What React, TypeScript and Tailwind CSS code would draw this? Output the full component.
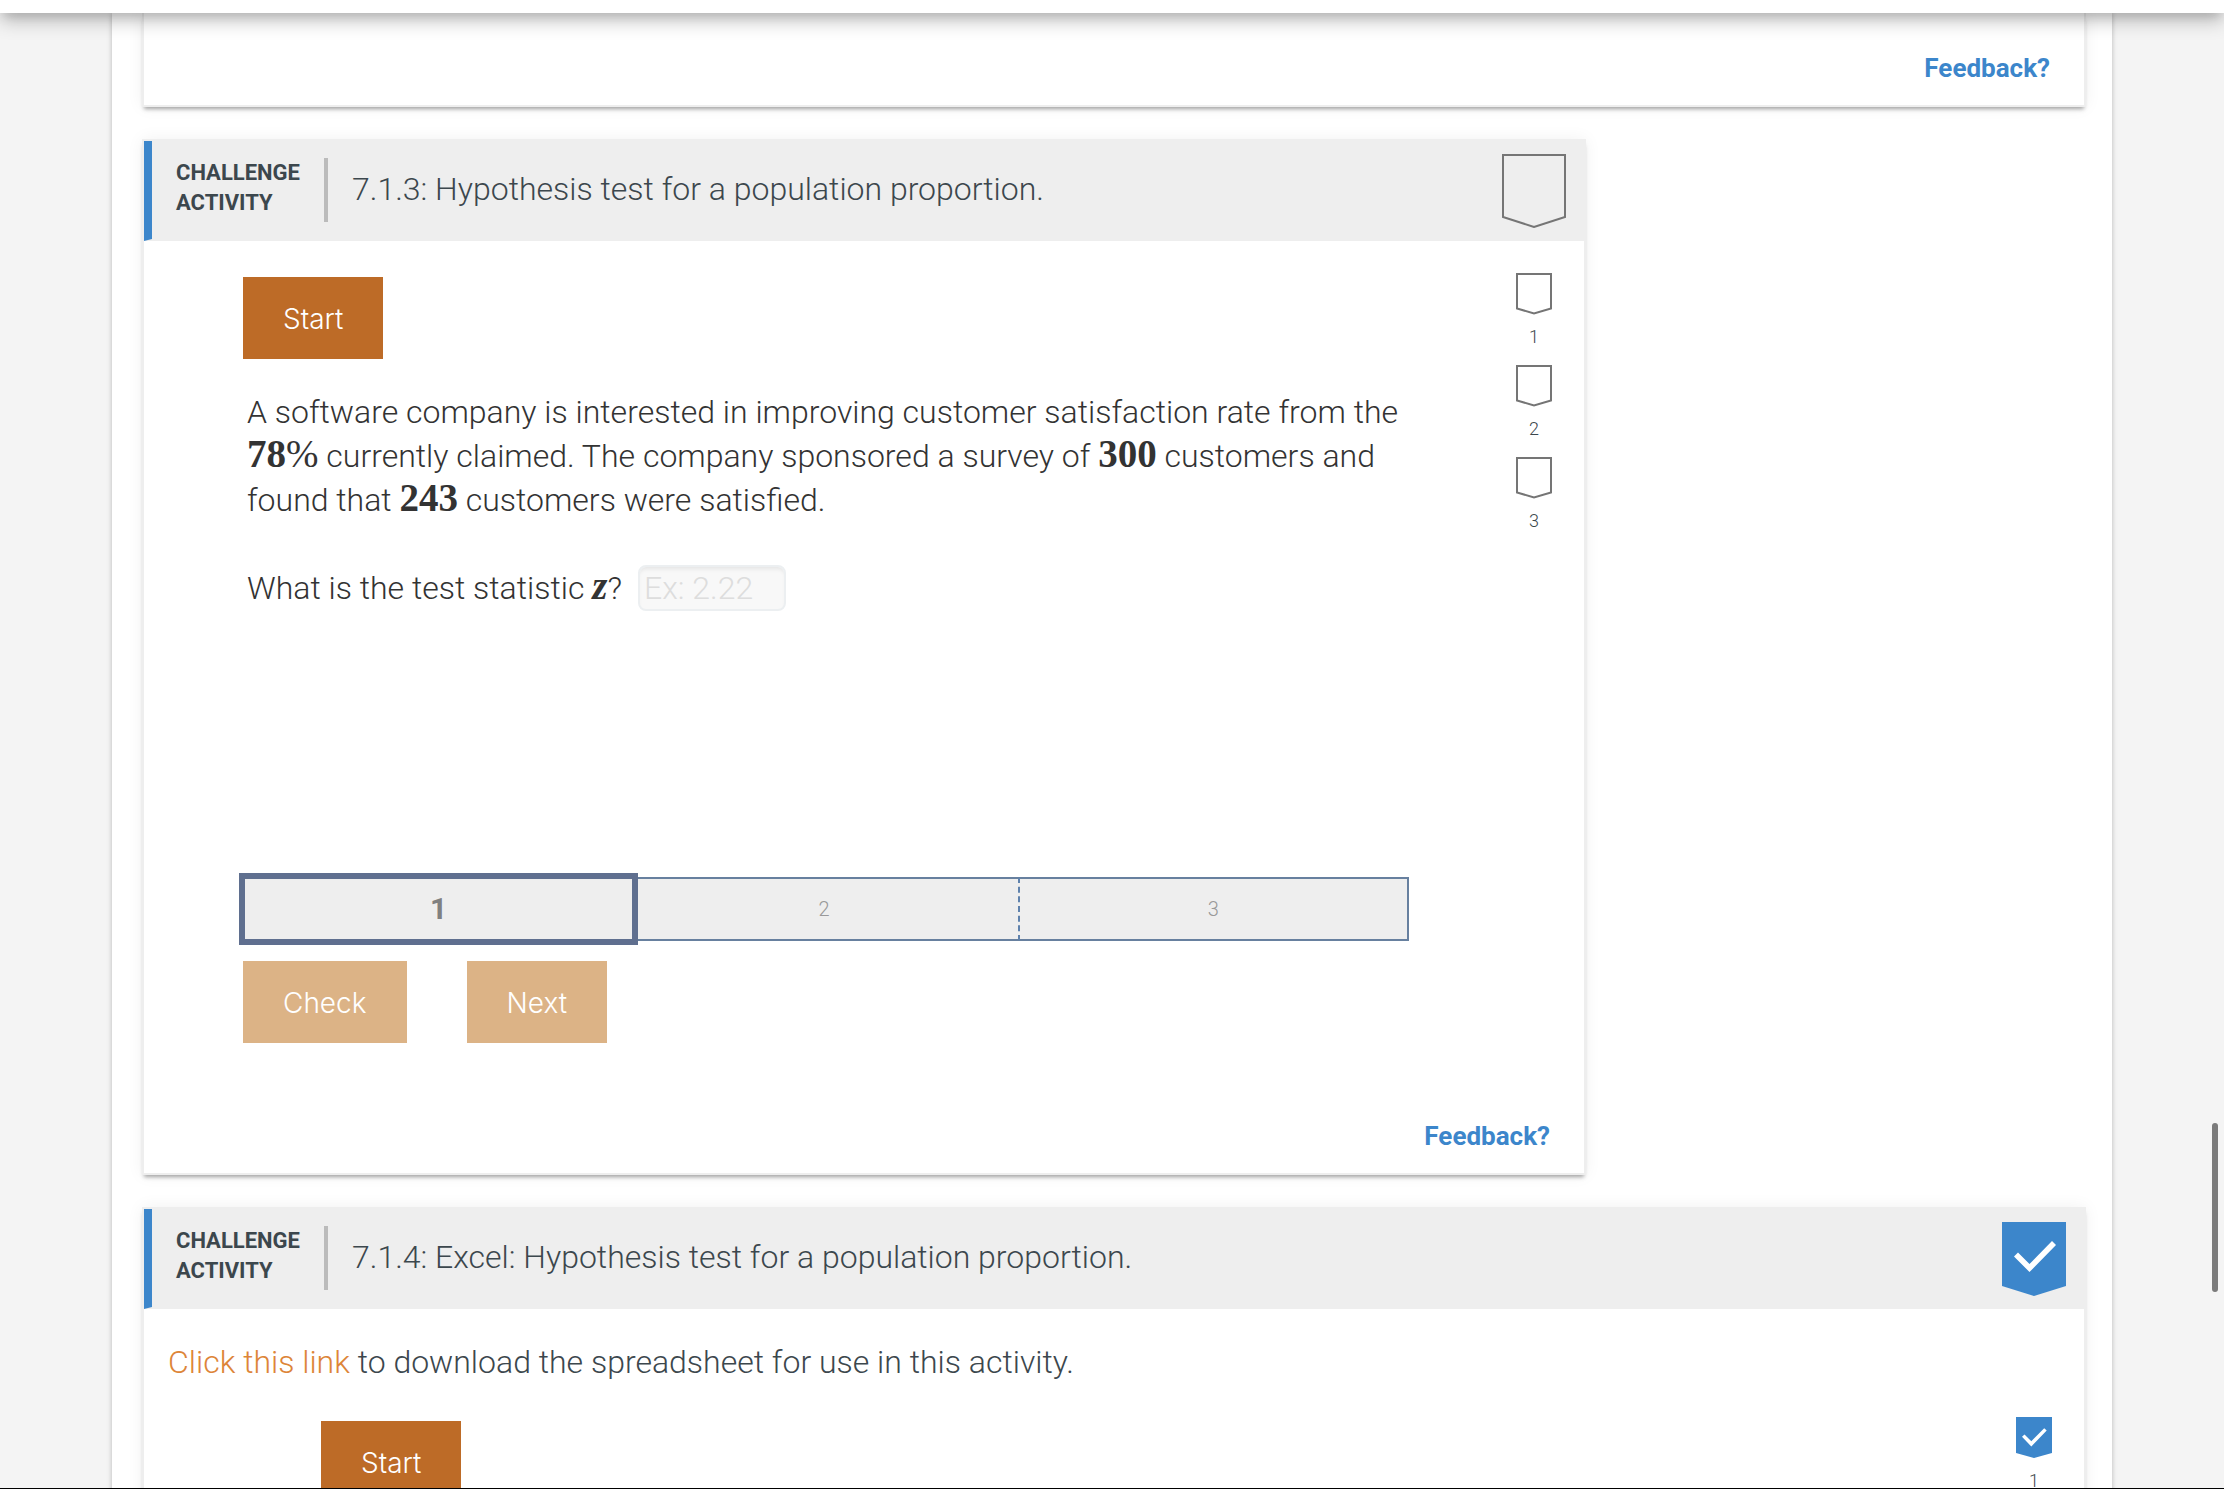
import React from 'react';

type BadgeProps = { done?: boolean };

function BadgeLarge({ done }: BadgeProps) {
    if (done) {
        return (
            <svg width="64" height="74" viewBox="0 0 64 74" role="img" aria-label="Activity completed">
                <path d="M0 0H64V64L32 74L0 64Z" fill="#3c86cb" />
                <path d="M12 34.5L16 30.5L27.5 42L50 19L54 23L27.5 50Z" fill="#fff" />
            </svg>
        );
    }
    return (
        <svg width="64" height="74" viewBox="0 0 64 74" role="img" aria-label="Activity not completed">
            <path d="M1 1H63V63L32 73L1 63Z" fill="none" stroke="#757575" strokeWidth="2" />
        </svg>
    );
}

function BadgeSmall({ done }: BadgeProps) {
    if (done) {
        return (
            <svg width="36" height="42" viewBox="0 0 36 42" role="img" aria-label="Level completed">
                <path d="M0 0H36V36L18 41L0 36Z" fill="#3c86cb" />
                <path d="M6 19.8L8.5 17.4L15.3 24.2L28.2 11.2L30.7 13.6L15.3 29.4Z" fill="#fff" />
            </svg>
        );
    }
    return (
        <svg width="36" height="42" viewBox="0 0 36 42" role="img" aria-label="Level not completed">
            <path d="M1 1H35V35.5L18 40.5L1 35.5Z" fill="none" stroke="#757575" strokeWidth="2" />
        </svg>
    );
}

function Levels({ count, done }: { count: number; done?: boolean }) {
    return (
        <ol className="flex flex-col gap-[18px] mr-8 shrink-0">
            {Array.from({ length: count }, (_, i) => (
                <li key={i} className="flex flex-col items-center gap-3">
                    <BadgeSmall done={done} />
                    <span className="text-[18px] leading-5 font-light">{i + 1}</span>
                </li>
            ))}
        </ol>
    );
}

function Button({ children, disabled }: { children: React.ReactNode; disabled?: boolean }) {
    return (
        <button
            type="button"
            disabled={disabled}
            className="h-[82px] px-10 pt-0.5 bg-[#bd6b27] disabled:bg-[#dcb386] text-white text-[28px] font-light font-['Inter',sans-serif]"
        >
            {children}
        </button>
    );
}

function Feedback() {
    return (
        <div className="flex justify-end pr-[34px] pb-[19px]">
            <a href="#feedback" className="text-[26px] leading-9 font-bold text-[#3c86cb]">
                Feedback?
            </a>
        </div>
    );
}

function ActivityHeader({ title, done }: { title: string; done?: boolean }) {
    return (
        <header className="h-[100px] flex items-start bg-[#eee] border-l-8 border-b-2 border-l-[#3c86cb] border-b-[#eee] pl-6 pr-[18px]">
            <div className="mt-[17px] h-16 w-[152px] border-r-4 border-[#bbb] text-[22px] leading-[30px] font-bold uppercase">
                Challenge activity
            </div>
            <h2 className="mt-[26px] ml-6 flex-1 text-[32px] leading-[44px] font-light">{title}</h2>
            <div className="mt-[13px]">
                <BadgeLarge done={done} />
            </div>
        </header>
    );
}

function Num({ children }: { children: React.ReactNode }) {
    return <span className="font-['Liberation_Serif',serif] text-[39px] leading-none font-bold">{children}</span>;
}

const card = 'bg-white border-2 border-[#eee] shadow-[0_4px_4px_-2px_rgba(0,0,0,0.35),0_0_16px_rgba(0,0,0,0.06)]';

export default function App() {
    return (
        <div className="relative h-screen overflow-hidden bg-[#f4f4f4] text-[#3c474d] font-['Roboto',sans-serif]">
            <div className="relative z-10 h-[13px] bg-white shadow-[0_6px_20px_rgba(0,0,0,0.3),0_4px_12px_-4px_rgba(0,0,0,0.4)]" />

            <main className="mx-[112px] min-h-full pl-[30px] pr-[26px] bg-white shadow-[0_0_5px_rgba(0,0,0,0.25)] flex flex-col gap-8">
                <section className={`${card} border-t-0 pt-[37px]`}>
                    <Feedback />
                </section>

                <section className={`${card} w-full max-w-[1444px]`}>
                    <ActivityHeader title="7.1.3: Hypothesis test for a population proportion." />
                    <div className="flex items-start pt-8">
                        <div className="flex-1 pt-1 pl-[99px] mr-[107px]">
                            <Button>Start</Button>
                            <div className="mt-[31px] min-h-[487px] pl-1 text-[32px] leading-[44px] font-light text-[#333]">
                                <p>
                                    A software company is interested in improving customer satisfaction rate from the{' '}
                                    <Num>78<span className="font-normal">%</span></Num> currently claimed. The company
                                    sponsored a survey of <Num>300</Num> customers and found that <Num>243</Num>{' '}
                                    customers were satisfied.
                                </p>
                                <div className="mt-[43px] flex items-center gap-4">
                                    <label htmlFor="statistic">
                                        What is the test statistic{' '}
                                        <i className="font-['Liberation_Serif',serif] text-[39px] leading-none font-bold">z</i>?
                                    </label>
                                    <input
                                        id="statistic"
                                        type="text"
                                        placeholder="Ex: 2.22"
                                        className="w-[148px] h-[46px] px-1 rounded-lg border-2 border-[#eceff1] bg-[#f8f8f8] shadow-[inset_0_4px_4px_-2px_rgba(0,0,0,0.08)] placeholder:text-[#ddd]"
                                    />
                                </div>
                            </div>

                            <ol className="-ml-0.5 grid grid-cols-3 h-16 text-[20px] font-light text-[#999]">
                                <li className="z-[1] -my-1 -ml-0.5 -mr-2 pb-0.5 flex items-center justify-center bg-[#eee] border-[6px] border-[#5f6f8f] text-[30px] font-bold text-[#808080]">
                                    1
                                </li>
                                <li className="flex items-center justify-center bg-[#eee] border-y-2 border-r-2 border-[#67809f] border-r-[#5f82ad] [border-right-style:dashed]">
                                    2
                                </li>
                                <li className="flex items-center justify-center bg-[#eee] border-2 border-l-0 border-[#67809f]">3</li>
                            </ol>

                            <div className="mt-5 flex gap-[60px]">
                                <Button disabled>Check</Button>
                                <Button disabled>Next</Button>
                            </div>
                        </div>
                        <Levels count={3} />
                    </div>
                    <div className="mt-[75px]">
                        <Feedback />
                    </div>
                </section>

                <section className={card}>
                    <ActivityHeader title="7.1.4: Excel: Hypothesis test for a population proportion." done />
                    <p className="mt-[31px] ml-6 text-[32px] leading-[44px] font-light">
                        <a href="#spreadsheet" className="text-[#dd8538]">Click this link</a> to download the spreadsheet
                        for use in this activity.
                    </p>
                    <div className="mt-[33px] flex items-start">
                        <div className="flex-1 pt-1 pl-[177px]">
                            <Button>Start</Button>
                        </div>
                        <Levels count={1} done />
                    </div>
                </section>
            </main>

            {/* Scroll thumb and window edge */}
            <div className="absolute right-1.5 top-[1123px] z-20 w-1.5 h-[169px] rounded-full bg-[#7b7b7b]" />
            <div className="absolute inset-x-0 bottom-0 z-20 h-px bg-black" />
        </div>
    );
}
